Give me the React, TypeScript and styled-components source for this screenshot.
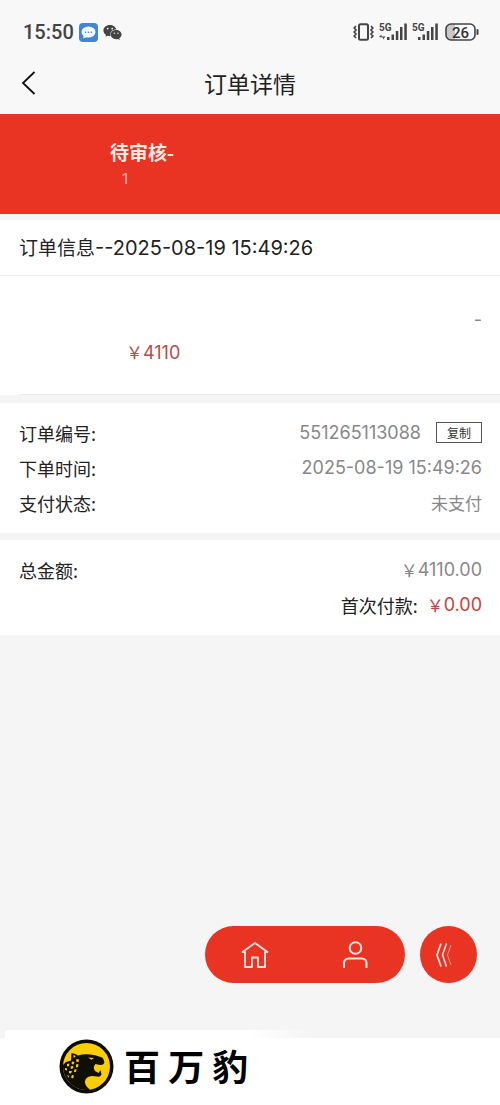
import React from "react";
import styled, { createGlobalStyle } from "styled-components";
import { FaWeixin } from "react-icons/fa6";

const GlobalStyle = createGlobalStyle`
  * { box-sizing: border-box; }
  body {
    margin: 0;
    background: #f5f5f5;
    color: #222;
    font-family: "Noto Sans CJK SC", sans-serif;
    font-size: 17px;
  }
  button { font: inherit; cursor: pointer; }
`;

const Page = styled.div`
  min-height: 100vh;
  display: flex;
  flex-direction: column;
`;

const Top = styled.header`
  background: #f8f8f8;
`;

const StatusBar = styled.div`
  display: flex;
  align-items: center;
  justify-content: space-between;
  height: 64px;
  padding: 0 20px 0 23px;
  color: #444;
`;

const StatusGroup = styled.div`
  display: flex;
  align-items: center;
  gap: 5px;
`;

const Clock = styled.time`
  font-family: Roboto, sans-serif;
  font-size: 20px;
  font-weight: 500;
  line-height: 24px;
`;

const TitleBar = styled.div`
  display: grid;
  grid-template-columns: 60px 1fr 60px;
  align-items: center;
  height: 50px;
  padding-bottom: 12px;
`;

const BackButton = styled.button`
  display: flex;
  padding: 0 0 0 20px;
  border: 0;
  background: none;
  color: #111;
`;

const Title = styled.h1`
  margin: 0;
  text-align: center;
  font-size: 23px;
  font-weight: 400;
  line-height: 32px;
`;

const Banner = styled.section`
  height: 100px;
  padding: 25px 0 0 110px;
  background: #e93323;
  color: #ffe9e5;
`;

const BannerState = styled.div`
  font-size: 19px;
  font-weight: 700;
  line-height: 26px;
`;

const BannerCount = styled.div`
  padding-left: 12px;
  font-family: Inter, sans-serif;
  font-size: 15px;
  line-height: 28px;
  color: #f9b5ad;
`;

const Card = styled.section<{ $gap: number }>`
  margin-top: ${(p) => p.$gap}px;
  background: #fff;
`;

const CardTitle = styled.h2`
  margin: 0;
  padding: 13px 19px;
  border-bottom: 1px solid #eee;
  font-size: 19px;
  font-weight: 400;
  line-height: 28px;
`;

const Product = styled.div`
  display: flex;
  flex-direction: column;
  height: 118px;
  padding: 30px 18px 0 126px;
`;

const ProductSpec = styled.div`
  text-align: right;
  line-height: 26px;
  color: #888;
`;

const ProductPrice = styled.div`
  padding-top: 6px;
  line-height: 26px;
  color: #b94a48;
`;

const Rule = styled.div`
  height: 1px;
  margin-left: 19px;
  background: #ececec;
`;

const Details = styled.dl`
  margin: 0;
  padding: 12px 18px 13px 19px;
`;

const Row = styled.div`
  display: flex;
  align-items: center;
  justify-content: space-between;
  height: 35px;
`;

const EndRow = styled(Row)`
  justify-content: flex-end;
  gap: 9px;
`;

const Label = styled.dt`
  font-size: 18px;
`;

const Value = styled.dd<{ $tone?: string }>`
  display: flex;
  align-items: center;
  margin: 0;
  color: ${(p) => p.$tone ?? "#888"};
`;

const Num = styled.span<{ $size?: number }>`
  font-family: Inter, sans-serif;
  font-size: ${(p) => p.$size ?? 18}px;
`;

const CopyButton = styled.button`
  width: 46px;
  height: 21px;
  margin-left: 15px;
  padding: 0;
  border: 1px solid #555;
  background: #fff;
  color: #333;
  font-size: 12px;
  line-height: 18px;
`;

const Dock = styled.nav`
  display: flex;
  justify-content: flex-end;
  gap: 15px;
  margin-top: auto;
  padding: 24px 23px 47px;
`;

const Pill = styled.div`
  display: flex;
  width: 200px;
  height: 57px;
  border-radius: 29px;
  background: #e93323;
`;

const DockButton = styled.button`
  flex: 1;
  display: flex;
  align-items: center;
  justify-content: center;
  padding: 0;
  border: 0;
  background: none;
  color: #ffe6e2;
`;

const RoundButton = styled(DockButton)`
  flex: none;
  width: 57px;
  height: 57px;
  padding-right: 10px;
  border-radius: 50%;
  background: #e93323;
`;

const Footer = styled.footer`
  display: flex;
  align-items: center;
  gap: 10px;
  height: 75px;
  padding: 0 0 2px 59px;
  background:
    linear-gradient(90deg, #f5f5f5 5px, #fff 5px, #fff 250px, #f5f5f5 310px) 0 0 / 100% 8px no-repeat,
    #fff;
`;

const Brand = styled.span`
  padding-bottom: 4px;
  color: #000;
  font-size: 36px;
  font-weight: 700;
  line-height: 48px;
`;

const ChatIcon = () => (
  <svg width="19" height="19" viewBox="0 0 19 19" aria-hidden="true">
    <rect width="19" height="19" rx="4" fill="#4284d6" />
    <ellipse cx="9.5" cy="9" rx="7" ry="5.6" fill="#f0f9ff" />
    <path d="M5 12l-1 3.5 4-1.5z" fill="#f0f9ff" />
    <g fill="#4284d6"><circle cx="6.6" cy="9.2" r=".8" /><circle cx="9.5" cy="9.2" r=".8" /><circle cx="12.4" cy="9.2" r=".8" /></g>
  </svg>
);

const VibrateIcon = () => (
  <svg width="21" height="18" viewBox="0 0 21 18" fill="none" stroke="#444" aria-hidden="true">
    <rect x="6" y="1.2" width="9" height="15.6" rx="1.5" strokeWidth="2" />
    <path d="M3 3L1.200 5 3 7 1.200 9 3 11 1.200 13 3 15M18 3l1.800 2L18 7l1.800 2L18 11l1.800 2L18 15" strokeWidth="1.700" />
  </svg>
);

const SignalIcon = ({ data = false }: { data?: boolean }) => (
  <svg width={data ? 28 : 26} height="18" viewBox={data ? "0 0 28 18" : "2 0 26 18"} fill="#444" aria-hidden="true">
    <text x={data ? 0 : 2} y="8" fontFamily="Roboto, sans-serif" fontSize="10" fontWeight="700">5G</text>
    {data && <path d="M0 14l2.500-2.500v2H6.500L4 16.500v-2z" />}
    <path d="M8 14h2.500v3H8zM12.500 11.500H15v5.500h-2.500zM16.800 8h2.500v9h-2.500zM21 4h2.500v13H21zM25.300 0.500h2.500V17h-2.500z" />
  </svg>
);

const BatteryIcon = () => (
  <svg width="37" height="18" viewBox="-2 0 37 18" aria-hidden="true">
    <path d="M10 1H6a5 5 0 0 0-5 5v6a5 5 0 0 0 5 5h4z" fill="#c8c8c8" />
    <rect x="1" y="1" width="29" height="16" rx="5" fill="none" stroke="#444" strokeWidth="1.6" />
    <rect x="31.500" y="6" width="2" height="6" rx="1" fill="#444" />
    <text x="15.500" y="14.500" textAnchor="middle" fill="#333" fontFamily="Roboto, sans-serif" fontSize="15" fontWeight="500">26</text>
  </svg>
);

const BackIcon = () => (
  <svg width="16" height="24" viewBox="0 0 16 24" fill="none" stroke="currentColor" strokeWidth="1.800" aria-hidden="true">
    <path d="M14.500 1L3 12l11.500 11" />
  </svg>
);

const HomeIcon = () => (
  <svg width="28" height="28" viewBox="0 0 28 28" fill="none" stroke="currentColor" strokeWidth="1.800" strokeLinejoin="round" aria-hidden="true">
    <path d="M14 2L1.500 11H4V26H11V16.500H17V26H24V11H26.500Z" />
  </svg>
);

const UserIcon = () => (
  <svg width="28" height="28" viewBox="0 0 28 28" fill="none" stroke="currentColor" strokeWidth="2" aria-hidden="true">
    <circle cx="14.500" cy="7" r="5.800" />
    <path d="M3 27V22a4.500 4.500 0 0 1 4.500-4.500H21a4.500 4.500 0 0 1 4.500 4.500V27" />
  </svg>
);

const CollapseIcon = () => (
  <svg width="18" height="26" viewBox="0 0 18 26" fill="none" stroke="currentColor" aria-hidden="true">
    <path d="M6 1.500L2 13l4 11.500" strokeWidth="1.700" />
    <path d="M11.500 1.500L7.500 13l4 11.500" strokeWidth="1.500" />
    <path d="M16 3L12.500 13 16 23" strokeWidth=".8" opacity=".7" />
  </svg>
);

const LeopardLogo = () => (
  <svg width="55" height="55" viewBox="0 0 55 55" role="img" aria-label="百万豹">
    <circle cx="27.500" cy="27.500" r="27" fill="#0c0b08" />
    <circle cx="27.500" cy="27.500" r="23.500" fill="#fbcd05" />
    <path d="M4 26L7 23 12 21.500 12.500 14Q17 14.500 19 16.500Q25 14.500 31 15.500Q37 16 40 17.500Q44 18 44.500 20.500L45.500 23.500Q44 26.500 41 26L36.500 25Q33.500 28 36 32L39.500 34L41.500 31L42.500 35.500Q41 38.500 38 37.500L33 37Q27 37.500 26 42Q25.500 47 31 50.700A23.500 23.500 0 0 1 4 26Z" fill="#110e04" />
    <path d="M29 18.500l6 .5-2.500 1.700z" fill="#fbcd05" />
    <path d="M14.500 16l2.500 1-2.500 2z" fill="#fbcd05" />
    <g fill="#fbcd05">
      <path d="M17.500 20l2.500.5-.5 2.500-2.500-.5zM13 22.500l2.500.5-1 2.500-2-.5zM8 25l2.500-.5-.5 2.500-2 .5zM17 25.500l2.500-.5-.5 3-2 .5zM11.500 27.500l2.500-.5.5 2-2.500 1zM6 29l2 .5 0 2-2-.5zM15.500 30.500l2-.5-.5 3-2 0zM10 32l3 0-1 2.500-2-.5zM13 36l2 .5-1 3-2-1zM8 36l2 1-.5 2z" />
    </g>
  </svg>
);

export default function App() {
  return (
    <Page>
      <GlobalStyle />
      <Top>
        <StatusBar>
          <StatusGroup>
            <Clock>15:50</Clock>
            <ChatIcon />
            <FaWeixin size={19} aria-hidden="true" />
          </StatusGroup>
          <StatusGroup>
            <VibrateIcon />
            <SignalIcon data />
            <SignalIcon />
            <BatteryIcon />
          </StatusGroup>
        </StatusBar>
        <TitleBar>
          <BackButton aria-label="返回"><BackIcon /></BackButton>
          <Title>订单详情</Title>
        </TitleBar>
      </Top>
      <main>
        <Banner>
          <BannerState>待审核-</BannerState>
          <BannerCount>1</BannerCount>
        </Banner>
        <Card $gap={6}>
          <CardTitle>订单信息<Num $size={20}>--2025-08-19 15:49:26</Num></CardTitle>
          <Product>
            <ProductSpec><Num>-</Num></ProductSpec>
            <ProductPrice>￥<Num>4110</Num></ProductPrice>
          </Product>
          <Rule />
        </Card>
        <Card $gap={8}>
          <Details>
            <Row>
              <Label>订单编号:</Label>
              <Value><Num>551265113088</Num><CopyButton>复制</CopyButton></Value>
            </Row>
            <Row>
              <Label>下单时间:</Label>
              <Value><Num>2025-08-19 15:49:26</Num></Value>
            </Row>
            <Row>
              <Label>支付状态:</Label>
              <Value>未支付</Value>
            </Row>
          </Details>
        </Card>
        <Card $gap={7}>
          <Details>
            <Row>
              <Label>总金额:</Label>
              <Value>￥<Num>4110.00</Num></Value>
            </Row>
            <EndRow>
              <Label>首次付款:</Label>
              <Value $tone="#c9403c">￥<Num>0.00</Num></Value>
            </EndRow>
          </Details>
        </Card>
      </main>
      <Dock>
        <Pill>
          <DockButton aria-label="首页"><HomeIcon /></DockButton>
          <DockButton aria-label="我的"><UserIcon /></DockButton>
        </Pill>
        <RoundButton aria-label="收起"><CollapseIcon /></RoundButton>
      </Dock>
      <Footer>
        <LeopardLogo />
        <Brand>百 万 豹</Brand>
      </Footer>
    </Page>
  );
}
